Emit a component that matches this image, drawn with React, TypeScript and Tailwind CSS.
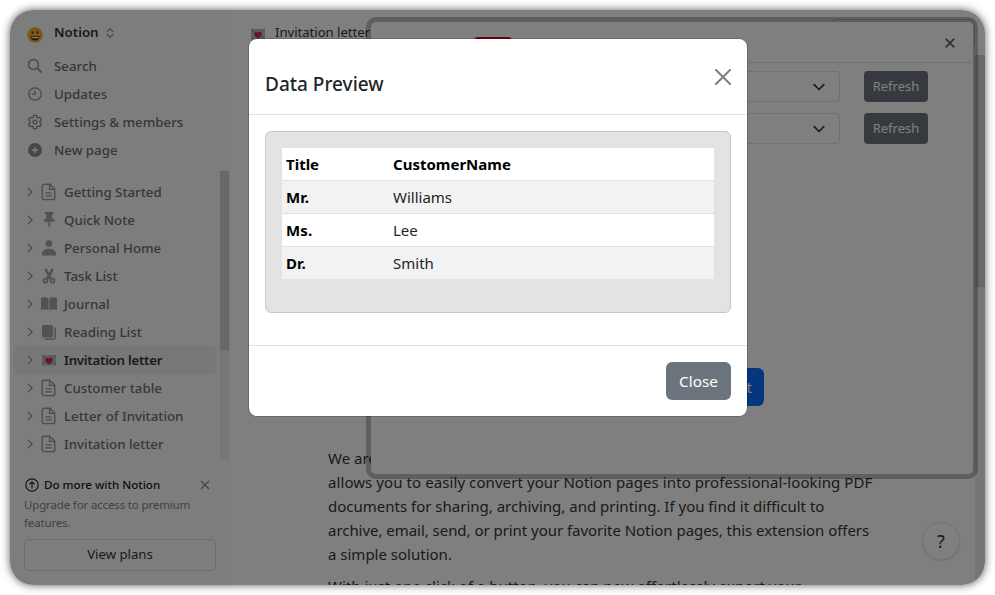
import React from "react";

const ui = "font-['Noto_Sans','Open_Sans',sans-serif]";

const Chevron = () => (
  <svg className="h-[10px] w-[6px] shrink-0" viewBox="0 0 6 10" fill="none" stroke="#a5a4a1" strokeWidth="1.4">
    <path d="M.8.8 5 5 .8 9.2" />
  </svg>
);

const DocIcon = () => (
  <svg className="h-[18px] w-4" viewBox="0 0 16 18" fill="none" stroke="#9b9a96" strokeWidth="1.4">
    <path d="M3.2 1.2h5.6l5 5v8.4a2 2 0 0 1-2 2H3.2a2 2 0 0 1-2-2V3.2a2 2 0 0 1 2-2Z" />
    <path d="M8.6 1.4v5h5" />
    <path d="M4.4 9.9h6.4M4.4 12.9h6.4" strokeWidth="1.1" />
  </svg>
);
const PinIcon = () => (
  <svg className="h-[18px] w-4" viewBox="0 0 16 18" fill="#a6a499">
    <path d="M3.800 1h8.600v1.800l-1.500 1.100.5 3.600c1.500.7 2.400 1.800 2.400 3.300H9v4L8.200 17l-.8-2.200v-4H2.600c0-1.500 1-2.600 2.400-3.300l.5-3.600L3.800 2.800Z" />
  </svg>
);
const PersonIcon = () => (
  <svg className="h-[18px] w-4" viewBox="0 0 16 18" fill="#a6a499">
    <circle cx="8" cy="4.600" r="3.400" />
    <path d="M1 16.500v-1.500c0-3 3-5.200 7-5.200s7 2.200 7 5.200v1.500Z" />
  </svg>
);
const ScissorsIcon = () => (
  <svg className="h-[18px] w-4" viewBox="0 0 16 18" fill="none" stroke="#a6a499">
    <circle cx="4.400" cy="13.600" r="2" strokeWidth="1.800" />
    <circle cx="11.600" cy="13.600" r="2" strokeWidth="1.800" />
    <path d="M4.300 2 9.900 12M11.700 2 6.100 12" strokeWidth="2.600" />
  </svg>
);
const JournalIcon = () => (
  <svg className="h-[18px] w-[18px]" viewBox="0 0 18 18" fill="#a6a499">
    <path d="M1 3c2.700-1 5.200-1 7.500.3v12C6.200 14 3.700 14 1 15Z" />
    <path d="M17 3c-2.700-1-5.200-1-7.500.3v12C11.800 14 14.300 14 17 15Z" />
  </svg>
);
const BookIcon = () => (
  <svg className="h-[18px] w-4" viewBox="0 0 16 18">
    <rect x="1" y="2" width="11.200" height="12.500" rx="1.500" fill="#a6a499" />
    <path d="M14.200 4.500v10.200a1.500 1.500 0 0 1-1.500 1.500H3.800" fill="none" stroke="#a6a499" strokeWidth="1.500" />
  </svg>
);
const LoveLetter = () => (
  <svg className="h-[11px] w-[14px]" viewBox="0 0 14 11">
    <rect width="14" height="10.500" rx=".8" fill="#b4bfc9" />
    <path d="m0 .3 7 5.500 7-5.500M0 10.300l4.800-5M14 10.300l-4.800-5" fill="none" stroke="#8796a6" strokeWidth=".9" />
    <path d="M7 9.300C4.700 7.800 3.600 6.500 3.600 4.800c0-1.900 2.400-2.300 3.400-.8 1-1.500 3.400-1.100 3.400.8C10.400 6.500 9.300 7.800 7 9.300Z" fill="#dd2344" stroke="#dd2344" strokeWidth=".6" />
  </svg>
);

const SearchIcon = () => (
  <svg className="h-4 w-4" viewBox="0 0 16 16" fill="none" stroke="#8f8e8b" strokeWidth="1.400">
    <circle cx="6.500" cy="6.500" r="5" />
    <path d="m10.200 10.200 4.400 4.300" strokeWidth="1.700" />
  </svg>
);
const ClockIcon = () => (
  <svg className="h-4 w-4" viewBox="0 0 16 16" fill="none" stroke="#8f8e8b" strokeWidth="1.300">
    <circle cx="8" cy="8" r="6.200" />
    <path d="M8 4.200v4H4.800" />
  </svg>
);
const GearIcon = () => (
  <svg className="h-4 w-4" viewBox="0 0 24 24" fill="none" stroke="#8f8e8b" strokeWidth="2" strokeLinejoin="round">
    <path d="M9.800 2h4.400l.7 3 1.600.9 3-.9 2.200 3.800-2.300 2.200v2l2.300 2.200-2.200 3.800-3-.9-1.600.9-.7 3H9.800l-.7-3-1.600-.9-3 .9-2.200-3.800L4.600 13v-2L2.300 8.800 4.500 5l3 .9L9.100 5Z" />
    <circle cx="12" cy="12" r="2.800" />
  </svg>
);
const PlusIcon = () => (
  <svg className="h-4 w-4" viewBox="0 0 16 16">
    <circle cx="8" cy="8" r="7" fill="#8f8e8b" />
    <path d="M8 5v6M5 8h6" stroke="#fbfbfa" strokeWidth="1.500" />
  </svg>
);

const nav = [
  { label: "Search", icon: <SearchIcon /> },
  { label: "Updates", icon: <ClockIcon /> },
  { label: "Settings & members", icon: <GearIcon /> },
  { label: "New page", icon: <PlusIcon /> },
];

const pages = [
  { label: "Getting Started", icon: <DocIcon /> },
  { label: "Quick Note", icon: <PinIcon /> },
  { label: "Personal Home", icon: <PersonIcon /> },
  { label: "Task List", icon: <ScissorsIcon /> },
  { label: "Journal", icon: <JournalIcon /> },
  { label: "Reading List", icon: <BookIcon /> },
  { label: "Invitation letter", icon: <LoveLetter />, active: true },
  { label: "Customer table", icon: <DocIcon /> },
  { label: "Letter of Invitation", icon: <DocIcon /> },
  { label: "Invitation letter", icon: <DocIcon /> },
];

function Sidebar() {
  return (
    <aside className="flex w-[219px] shrink-0 flex-col bg-[#fbfbfa] text-[13.300px] text-[#706f6b]">
      <div className="mt-[9px] flex h-7 items-center pl-[17px] font-semibold text-[#37352f]">
        <svg className="mt-1 h-4 w-4" viewBox="0 0 16 16">
          <circle cx="8" cy="8" r="7.800" fill="#f3b234" />
          <path d="M3.300 9.200h9.400c-.6 2.800-2.300 4.200-4.700 4.200s-4.100-1.400-4.700-4.200Z" fill="#4a2d16" />
          <path d="M4.300 9.900h7.400l-.7 1.400H5Z" fill="#fff" />
          <ellipse cx="5.500" cy="5.500" rx=".9" ry="1.300" fill="#5c3816" />
          <ellipse cx="10.500" cy="5.500" rx=".9" ry="1.300" fill="#5c3816" />
        </svg>
        <span className="ml-[11px]">Notion</span>
        <svg className="ml-[7px] h-[10px] w-2" viewBox="0 0 8 10" fill="none" stroke="#8f8e8b" strokeWidth="1.200">
          <path d="m.8 3.700 3.200-3 3.200 3M.8 6.300l3.200 3 3.200-3" />
        </svg>
      </div>
      <nav className="mt-[5px]">
        {nav.map((n) => (
          <div key={n.label} className="flex h-7 items-center gap-[11px] pl-[17px] font-medium">
            {n.icon}
            <span className="pt-px">{n.label}</span>
          </div>
        ))}
      </nav>
      <div className="mt-[7px] flex h-[288px] w-[220px] justify-between">
        <div className="w-[206px] pl-1 pt-[7px]">
          {pages.map((p, i) => (
            <div
              key={i}
              className={
                p.active
                  ? "flex h-7 items-center rounded bg-[#efefee] font-semibold tracking-[-0.270px] text-[#37352f]"
                  : "flex h-7 items-center font-medium"
              }
            >
              <div className="flex h-full items-center pl-[13px]">
                <Chevron />
                <span className="ml-[6px] flex w-5 justify-center">{p.icon}</span>
                <span className="ml-[5px] pt-px">{p.label}</span>
              </div>
            </div>
          ))}
        </div>
        <div className="w-[10px] bg-[#edece9]">
          <div className="h-[179px] bg-[#d3d1cb]" />
        </div>
      </div>
      <div className="w-[220px] px-[14px] pt-4">
        <div className="flex h-[20px] items-center text-[11.600px] font-medium text-[#1d1b17]">
          <svg className="h-4 w-4" viewBox="0 0 16 16" fill="none" stroke="#37352f" strokeWidth="1.300">
            <circle cx="8" cy="8" r="6.200" />
            <path d="M8 11.500V5M5.500 7.300 8 4.800l2.500 2.500" />
          </svg>
          <span className="ml-1 grow">Do more with Notion</span>
          <svg className="mr-[6px] h-[10px] w-[10px]" viewBox="0 0 10 10" stroke="#8f8e8b" strokeWidth="1.400">
            <path d="m1 1 8 8M9 1 1 9" />
          </svg>
        </div>
        <p className="mt-[1px] text-[11.500px] leading-[18px] tracking-[-0.150px] text-[#84837f]">
          Upgrade for access to premium
          <br />
          features.
        </p>
        <button className="mt-[7px] block h-8 w-full rounded border border-[#dddcda] text-[13.200px] text-[#37352f]">
          View plans
        </button>
      </div>
    </aside>
  );
}

function PageContent() {
  return (
    <main className="flex min-w-0 grow border-l border-[#f4f4f3] bg-white">
      <div className="relative min-w-0 grow">
        <div className="flex h-[45px] items-center gap-[10px] pl-[21px] text-[13.200px] text-[#37352f]">
          <span className="pt-1">
            <LoveLetter />
          </span>
          <span className="tracking-[-0.050px]">Invitation letter</span>
        </div>
        <div className="whitespace-nowrap pl-[98px] pt-[391px] text-[15px] leading-6 text-[#37352f]">
          <p>We are excited to introduce our new extension that</p>
          <p className="tracking-[0.080px]">
            allows you to easily convert your Notion pages into professional-looking PDF
          </p>
          <p>documents for sharing, archiving, and printing. If you find it difficult to</p>
          <p className="tracking-[-0.040px]">
            archive, email, send, or print your favorite Notion pages, this extension offers
          </p>
          <p>a simple solution.</p>
          <p className="mt-2">With just one click of a button, you can now effortlessly export your</p>
        </div>
        <div className="absolute bottom-[25px] right-[15px] flex h-[38px] w-[38px] items-center justify-center rounded-full border border-[#e6e6e6] text-[18px] text-[#37352f] shadow-sm">
          ?
        </div>
        <div className="absolute right-0 top-[9px] h-[28px] w-[142px] rounded border border-[#d5d5d5]" />
      </div>
      <div className="mt-[45px] w-[10px] shrink-0 bg-[#edece9]">
        <div className="h-[232px] bg-[#d3d1cb]" />
      </div>
    </main>
  );
}

const SelectRow = () => (
  <div className="flex h-[31px] items-center justify-end">
    <div className="flex h-full w-[420px] items-center justify-end rounded border border-[#dee2e6] pr-[14px]">
      <svg className="h-[8px] w-3" viewBox="0 0 12 8" fill="none" stroke="#343a40" strokeWidth="1.700" strokeLinecap="round" strokeLinejoin="round">
        <path d="m1.200 1.700 4.800 4.800 4.800-4.800" />
      </svg>
    </div>
    <button className="ml-6 h-full w-16 rounded bg-[#6c757d] pt-px text-[13px] text-white">Refresh</button>
  </div>
);

function ExtensionDialog() {
  return (
    <section className="absolute left-[356px] top-[7px] flex h-[462px] w-[612px] flex-col rounded-[10px] border-[5px] border-black/25 bg-white bg-clip-padding">
      <header className="flex h-[41px] items-center justify-between border-b border-[#dee2e6] pr-[18px]">
        <span className="ml-[103px] mt-[14px] h-[24px] w-[38px] rounded bg-[#dc0020]" />
        <svg className="mt-[2px] h-[10px] w-[10px]" viewBox="0 0 10 10" stroke="#666" strokeWidth="1.800">
          <path d="m.7.7 8.600 8.600M9.300.7.7 9.300" />
        </svg>
      </header>
      <div className="flex flex-col gap-[11px] pr-[45px] pt-2">
        <SelectRow />
        <SelectRow />
      </div>
      <button className="ml-[285px] mt-[224px] h-[38px] w-[108px] rounded-md bg-[#0d6efd] pr-3 text-right text-[15.300px] text-white">
        Export
      </button>
    </section>
  );
}

const rows = [
  ["Mr.", "Williams"],
  ["Ms.", "Lee"],
  ["Dr.", "Smith"],
];

function PreviewDialog() {
  return (
    <section className="absolute left-[239px] top-[29px] flex h-[377px] w-[498px] flex-col rounded-lg bg-white shadow-[0_0_0_1px_rgba(0,0,0,0.175)]">
      <header className="flex h-[76px] items-center justify-between border-b border-[#dee2e6] px-4 pt-[15px]">
        <h5 className="text-[19px] font-medium leading-[30px] text-[#212529]">Data Preview</h5>
        <svg className="-mt-[15px] h-4 w-4" viewBox="0 0 16 16" stroke="#7f7f7f" strokeWidth="2" strokeLinecap="round">
          <path d="m1 1 14 14M15 1 1 15" />
        </svg>
      </header>
      <div className="grow p-4">
        <div className="h-[182px] rounded-md border border-[#c4c8cb] bg-[#e2e3e5] p-4">
          <div className="flex flex-col text-[15px] leading-6 text-black">
            <div className="flex h-[33px] items-center border-b border-[#dee2e6] bg-white px-1 font-bold">
              <span className="w-[107px]">Title</span>
              <span>CustomerName</span>
            </div>
            {rows.map(([t, n]) => (
              <div
                key={t}
                className="flex h-[33px] items-center border-b border-[#dee2e6] px-1 odd:bg-white even:bg-[#f2f2f2] last:h-8 last:border-b-0"
              >
                <span className="w-[107px] font-bold tracking-[0.100px]">{t}</span>
                <span className="text-[#212529]">{n}</span>
              </div>
            ))}
          </div>
        </div>
      </div>
      <footer className="flex h-[71px] items-center justify-end border-t border-[#dee2e6] pr-4">
        <button className="h-[38px] w-[65px] rounded-md bg-[#6c757d] text-[15.300px] text-white">Close</button>
      </footer>
    </section>
  );
}

export default function App() {
  return (
    <div className={`${ui} h-[595px] w-[995px] bg-white p-[10px]`}>
      <div className="relative flex h-[575px] w-[975px] overflow-hidden rounded-[23px] shadow-[0_0_9px_rgba(0,0,0,0.65)]">
        <Sidebar />
        <PageContent />
        <ExtensionDialog />
        <div className="absolute inset-0 bg-black/50" />
        <PreviewDialog />
      </div>
    </div>
  );
}
